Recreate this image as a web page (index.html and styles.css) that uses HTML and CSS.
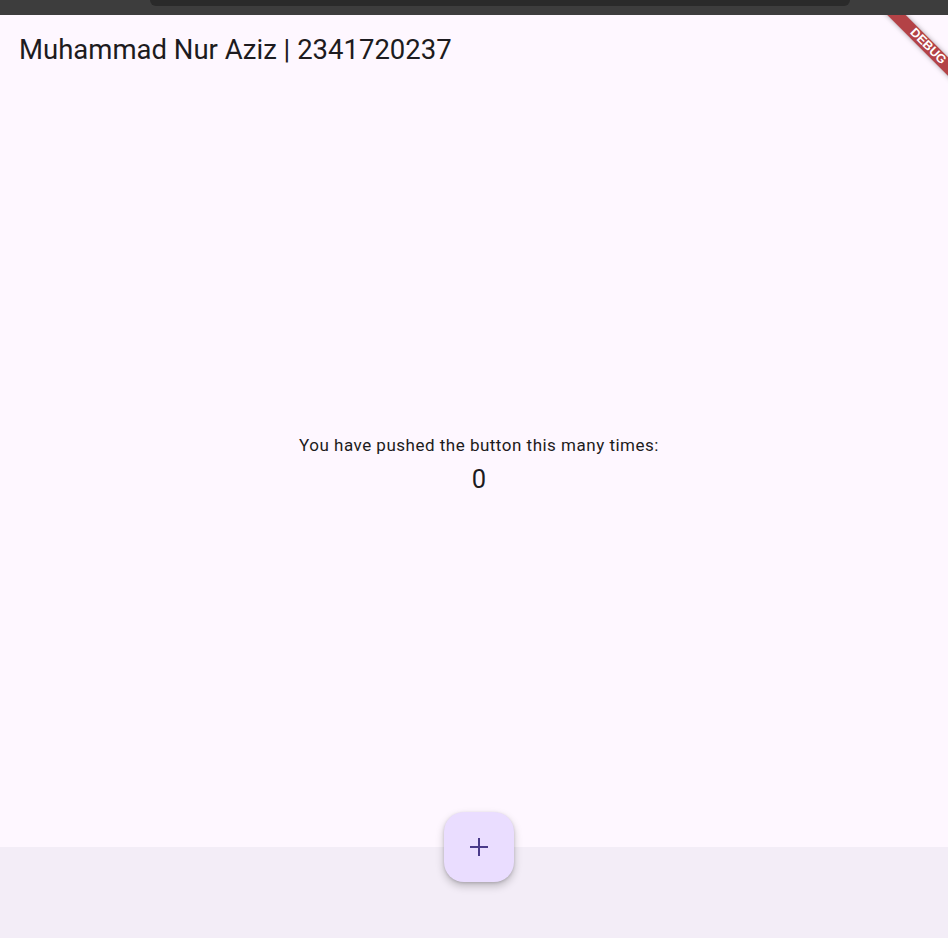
FILE: index.html
```html
<!DOCTYPE html>
<html>
<head>
<meta charset="utf-8">
<link rel="stylesheet" href="styles.css">
</head>
<body>
<div class="app">
  <div class="topbar"><div class="notch"></div></div>
  <div class="screen">
    <header class="appbar">
      <h1 class="title">Muhammad Nur Aziz | 2341720237</h1>
    </header>
    <main class="content">
      <p class="label">You have pushed the button this many times:</p>
      <p class="counter">0</p>
    </main>
    <div class="banner"><span class="banner-text">DEBUG</span></div>
  </div>
  <footer class="bottombar"></footer>
  <button class="fab" aria-label="Increment">
    <svg width="20" height="20" viewBox="0 0 20 20"><path d="M10 1v18M1 10h18" stroke="#4a3a8a" stroke-width="2" fill="none"/></svg>
  </button>
</div>
</body>
</html>
```
FILE: styles.css
```css
html, body {
  margin: 0;
  padding: 0;
  height: 100%;
  overflow: hidden;
}
body {
  font-family: Roboto, "Noto Sans", sans-serif;
  color: #1d1b20;
  background: #f3edf7;
}
.app {
  position: relative;
  width: 958px;
  height: 938px;
  display: flex;
  flex-direction: column;
  overflow: hidden;
}
.topbar {
  height: 15px;
  background: #3d3d3d;
  display: flex;
  flex: none;
}
.notch {
  margin-left: 150px;
  width: 700px;
  height: 6px;
  background: #2a2a2a;
  border-radius: 0 0 8px 8px;
}
.screen {
  position: relative;
  height: 832px;
  flex: none;
  background: #fef7ff;
  display: flex;
  flex-direction: column;
  overflow: hidden;
}
.appbar {
  height: 70px;
  display: flex;
  align-items: center;
  padding: 0 19px;
  flex: none;
}
.title {
  margin: 0;
  font-size: 27.5px;
  font-weight: 400;
  line-height: 36px;
  color: #1d1b20;
}
.content {
  flex: 1;
  display: flex;
  flex-direction: column;
  align-items: center;
  justify-content: center;
  padding-bottom: 2px;
}
.label {
  margin: 0 0 3px;
  font-size: 17px;
  line-height: 25px;
  letter-spacing: 0.5px;
  color: #1d1b20;
}
.counter {
  margin: 0;
  font-size: 25.5px;
  line-height: 36px;
  color: #1d1b20;
}
.bottombar {
  flex: 1;
  background: #f3edf7;
}
.fab {
  position: absolute;
  left: 444px;
  top: 812px;
  width: 70px;
  height: 70px;
  border: none;
  border-radius: 20px;
  background: #eaddff;
  box-shadow: 0 4px 8px rgba(0,0,0,0.22), 0 1px 3px rgba(0,0,0,0.15);
  display: flex;
  align-items: center;
  justify-content: center;
  padding: 0;
}
.banner {
  position: absolute;
  top: 25px;
  right: -35px;
  width: 130px;
  height: 13px;
  background: rgba(160, 20, 24, 0.8);
  transform: rotate(45deg);
  box-shadow: 0 0 5px rgba(0,0,0,0.35);
  display: flex;
  align-items: center;
  justify-content: center;
}
.banner-text {
  color: #fff;
  font-family: "Liberation Sans", Arial, sans-serif;
  font-weight: 700;
  font-size: 12.5px;
  line-height: 13px;
}
```
